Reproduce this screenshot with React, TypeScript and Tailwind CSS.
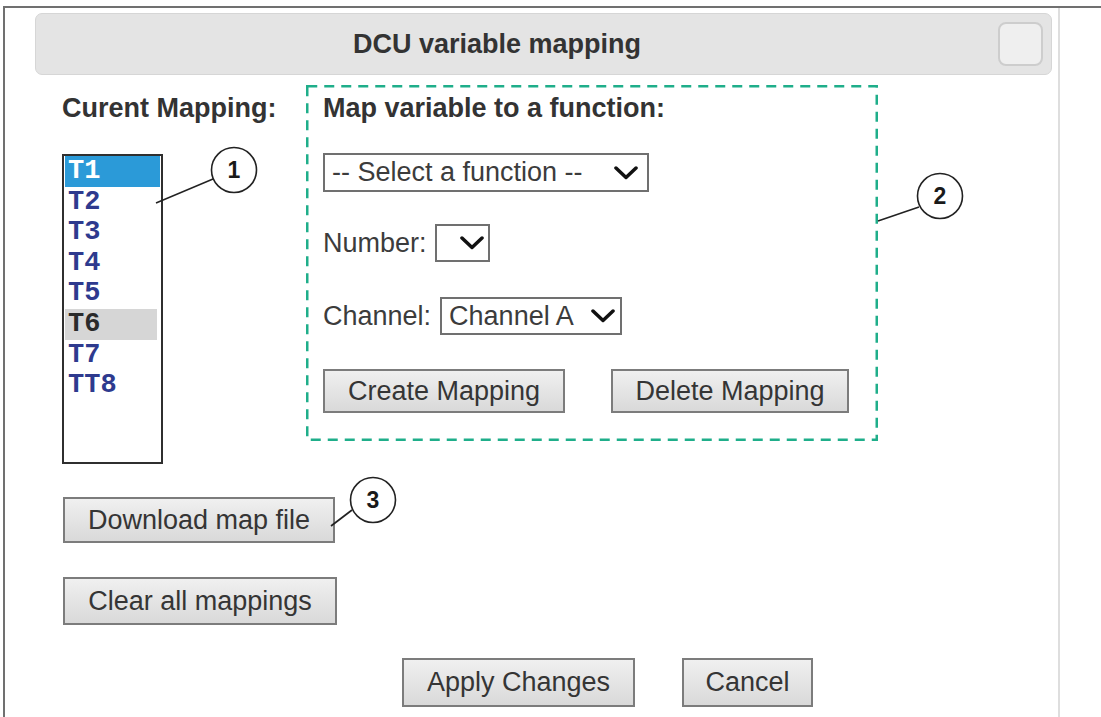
import React from 'react';

const items = ['T1', 'T2', 'T3', 'T4', 'T5', 'T6', 'T7', 'TT8'];

function Chevron() {
  return (
    <svg width="24" height="14" viewBox="0 0 24 14" className="shrink-0">
      <polyline points="2,2 12,11.5 22,2" fill="none" stroke="#111" strokeWidth="3.5" strokeLinecap="round" strokeLinejoin="round" />
    </svg>
  );
}

function Btn({ label, className }: { label: string; className: string }) {
  return (
    <div
      className={`flex items-center justify-center border-2 border-[#7c7c7c] bg-linear-to-b from-[#f0f0f0] to-[#d9d9d9] text-[27px] leading-none text-[#353535] ${className}`}
    >
      {label}
    </div>
  );
}

function Annotation({ cx, cy, n, x1, y1, x2, y2 }: { cx: number; cy: number; n: string; x1: number; y1: number; x2: number; y2: number }) {
  return (
    <g>
      <line x1={x1} y1={y1} x2={x2} y2={y2} stroke="#222" strokeWidth="1.6" />
      <circle cx={cx} cy={cy} r="22.5" fill="white" stroke="#222" strokeWidth="1.6" />
      <text x={cx} y={cy + 8} textAnchor="middle" fontFamily="'Liberation Sans', Arial, sans-serif" fontWeight="700" fontSize="23" fill="#1a1a1a">
        {n}
      </text>
    </g>
  );
}

export default function App() {
  return (
    <div className="relative w-[1101px] h-[717px] overflow-hidden bg-white font-[family-name:Liberation_Sans,Arial,sans-serif] text-[#3c3c3c]">
      <div className="mt-[6px] ml-[3px] h-[711px] border-t-2 border-l-2 border-[#707070]">
        <div className="w-[1055px] h-full border-r-2 border-[#dedede] pt-[5px]">
          {/* Header */}
          <div className="ml-[30px] w-[1017px] h-[62px] rounded-[7px] border border-[#d6d6d6] bg-[#e4e4e4] flex items-center">
            <div className="w-[922px] text-center text-[27px] font-bold text-[#333]">DCU variable mapping</div>
            <div className="ml-[40px] w-[45px] h-[44px] rounded-[8px] border-2 border-[#cdcdcd] bg-[#efefef]" />
          </div>

          {/* Body */}
          <div className="pl-[57px] mt-[10px] flex items-start">
            <div className="w-[244px] pt-[8px]">
              <div className="text-[27px] leading-[31px] font-bold text-[#333]">Curent Mapping:</div>
              <div className="mt-[30px] w-[101px] h-[310px] border-2 border-[#2f2f2f] px-[1px] font-[family-name:Liberation_Mono,Courier_New,monospace] font-bold text-[27px]">
                {items.map((t) => (
                  <div
                    key={t}
                    className={`h-[30.6px] leading-[30.6px] pl-[3px] ${
                      t === 'T1'
                        ? 'bg-[#2b9ad8] text-white'
                        : t === 'T6'
                        ? 'bg-[#d6d6d6] text-[#2a2a2a] mr-[3px]'
                        : 'text-[#2e3a8e]'
                    }`}
                  >
                    {t}
                  </div>
                ))}
              </div>
            </div>

            {/* Map variable box */}
            <div className="relative w-[572px] h-[356px] pl-[17px] pt-[8px]">
              <svg className="absolute inset-0 pointer-events-none" width="572" height="356">
                <rect x="1.25" y="1.25" width="569.5" height="353.5" fill="none" stroke="#1fae8a" strokeWidth="2.5" strokeDasharray="10 7" />
              </svg>
              <div className="text-[27px] leading-[31px] font-bold text-[#333]">Map variable to a function:</div>
              <div className="mt-[29px] w-[326px] h-[39px] border-2 border-[#707070] bg-white flex items-center pl-[7px] pr-[9px] text-[27px] leading-none">
                <span className="flex-1">-- Select a function --</span>
                <Chevron />
              </div>
              <div className="mt-[32px] flex items-center text-[27px] leading-none">
                <span>Number:</span>
                <div className="ml-[8px] w-[55px] h-[38px] border-2 border-[#707070] flex items-center justify-end pr-[4px]">
                  <Chevron />
                </div>
              </div>
              <div className="mt-[35px] flex items-center text-[27px] leading-none">
                <span>Channel:</span>
                <div className="ml-[9px] w-[182px] h-[38px] border-2 border-[#707070] flex items-center pl-[7px] pr-[5px]">
                  <span className="flex-1">Channel A</span>
                  <Chevron />
                </div>
              </div>
              <div className="mt-[34px] flex">
                <Btn label="Create Mapping" className="w-[242px] h-[44px]" />
                <Btn label="Delete Mapping" className="ml-[46px] w-[238px] h-[44px]" />
              </div>
            </div>
          </div>

          {/* Lower buttons */}
          <div className="pl-[58px]">
            <Btn label="Download map file" className="mt-[33px] w-[272px] h-[46px]" />
            <Btn label="Clear all mappings" className="mt-[34px] w-[274px] h-[48px]" />
            <div className="mt-[33px] ml-[339px] flex">
              <Btn label="Apply Changes" className="w-[233px] h-[49px]" />
              <Btn label="Cancel" className="ml-[47px] w-[131px] h-[49px]" />
            </div>
          </div>
        </div>
      </div>

      {/* Callouts */}
      <svg className="absolute inset-0 pointer-events-none" width="1101" height="717">
        <Annotation cx={234} cy={170} n="1" x1={156} x2={213} y1={203} y2={179} />
        <Annotation cx={940} cy={196} n="2" x1={878} x2={919} y1={221} y2={207} />
        <Annotation cx={373} cy={500} n="3" x1={331} x2={352} y1={526} y2={510} />
      </svg>
    </div>
  );
}
